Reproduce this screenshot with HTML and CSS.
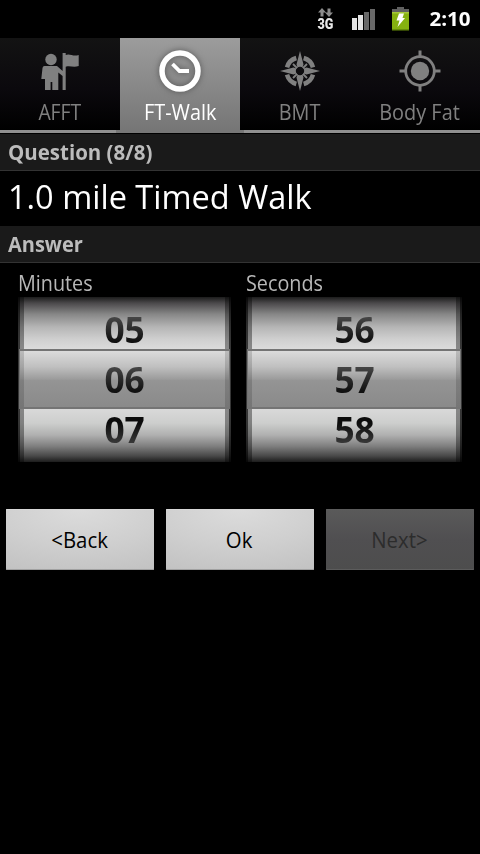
FILE: index.html
```
<!DOCTYPE html>
<html lang="en">
<head>
<meta charset="utf-8">
<title>Fitness Test</title>
<link rel="stylesheet" href="styles.css">
</head>
<body>
<header class="status">
  <div class="network">
    <svg class="arrows" viewBox="0 0 15 9"><path d="M4 0 8 4.500H5.500V8.500H2.500V4.500H0ZM9.500 0.500h3V4.500H15L11 9 7 4.500H9.500Z"/></svg>
    <span class="net-label">3G</span>
  </div>
  <svg class="signal" viewBox="0 0 24 21">
    <path fill="#e4e4e4" d="M0 9h5v12H0zM6 6h5v15H6z"/>
    <path fill="#686868" d="M12 3h5v18h-5zM18 0h5v21h-5z"/>
  </svg>
  <svg class="battery" viewBox="0 0 18 24">
    <path fill="#606060" d="M5 0h7v2H17v4H0V2h5z"/>
    <path fill="#85b110" d="M0 5h17v18H0z"/>
    <path fill="#a5c73a" d="M0 5h17v1.500H0z"/>
    <path fill="#668d08" d="M0 22h17v1.500H0z"/>
    <path fill="#fff" d="M7 6.500h5l-1.500 4.500H13L5.500 20 7.500 13.500H4.500z"/>
  </svg>
  <span class="clock">2:10</span>
</header>

<nav class="tabs">
  <div class="tab">
    <svg class="icon" viewBox="0 -.5 48 48">
      <circle cx="15" cy="11" r="5.700"/>
      <path d="M8.500 17.500H21L26.600 22.500V4.500H29.700V6.500c4-2 7 1.800 13 0v11c-5.500 2-8.500-.8-13 .8V41.500h-3.100V27.500L22.300 24V41.500H16.300V33.500h-1.700V41.500H9V30.500H5.300L6.500 19.500Q6.800 17.500 8.500 17.500Z"/>
    </svg>
    <span class="label afft">AFFT</span>
  </div>
  <div class="tab selected">
    <svg class="icon" viewBox="0 -.5 48 48">
      <circle class="line" cx="24" cy="22.500" r="18" stroke-width="5.500"/>
      <path class="line" d="M16.500 15.500 23.500 22.500H33" stroke-width="3.800"/>
    </svg>
    <span class="label">FT-Walk</span>
  </div>
  <div class="tab">
    <svg class="icon" viewBox="0 -.5 48 48">
      <path class="line" stroke-width="4.500" d="M11 18.800A13.500 13.500 0 0 1 20.300 9.500M27.700 9.500A13.500 13.500 0 0 1 37 18.800M37 26.200A13.500 13.500 0 0 1 27.700 35.500M20.300 35.500A13.500 13.500 0 0 1 11 26.200"/>
      <path class="line" stroke-width="1.800" d="m17 15.500 4 4m10-4-4 4m-10 10 4-4m10 4-4-4"/>
      <path fill-rule="evenodd" d="M24 2.500 27.500 16 26.700 18.200 28.300 19.800 30.500 19 44 22.500 30.500 26 28.300 25.200 26.700 26.800 27.500 29 24 42.500 20.500 29 21.300 26.800 19.700 25.200 17.500 26 4 22.500 17.500 19 19.700 19.800 21.300 18.200 20.500 16ZM24 18.300a4.200 4.200 0 1 0 0 8.400 4.200 4.200 0 0 0 0-8.400Z"/>
    </svg>
    <span class="label">BMT</span>
  </div>
  <div class="tab">
    <svg class="icon" viewBox="0 -.5 48 48">
      <circle cx="24" cy="22.500" r="9.200"/>
      <circle class="line" cx="24" cy="22.500" r="14.300" stroke-width="2.800"/>
      <path class="line" stroke-width="3" d="M24 2v6M24 37v6M3.500 22.500h6M38.500 22.500h6"/>
    </svg>
    <span class="label">Body Fat</span>
  </div>
</nav>
<div class="strip"></div>

<main>
  <h2 class="section"><span class="question">Question (8/8)</span></h2>
  <h1 class="title"><span>1.0 mile Timed Walk</span></h1>
  <h2 class="section"><span class="answer">Answer</span></h2>

  <div class="pickers">
    <div class="field minutes">
      <span class="caption">Minutes</span>
      <div class="wheel">
        <div class="band"></div>
        <span class="num top">05</span>
        <span class="num mid">06</span>
        <span class="num bottom">07</span>
      </div>
    </div>
    <div class="field seconds">
      <span class="caption">Seconds</span>
      <div class="wheel">
        <div class="band"></div>
        <span class="num top">56</span>
        <span class="num mid">57</span>
        <span class="num bottom">58</span>
      </div>
    </div>
  </div>

  <div class="buttons">
    <button class="btn"><span>&lt;Back</span></button>
    <button class="btn"><span>Ok</span></button>
    <button class="btn" disabled><span>Next&gt;</span></button>
  </div>
</main>
</body>
</html>
```
FILE: styles.css
```
* { box-sizing: border-box; }

body {
  margin: 0;
  width: 480px;
  min-height: 854px;
  background: #000;
  color: #fff;
  font-family: "Open Sans", "Noto Sans", sans-serif;
}

h1, h2 { margin: 0; }

/* status bar */
.status {
  height: 38px;
  display: flex;
  align-items: flex-start;
  padding-left: 317px;
}
.network {
  width: 16px;
  padding-top: 8px;
  display: flex;
  flex-direction: column;
  align-items: center;
}
.arrows { width: 15px; height: 9px; fill: #8c8c8c; }
.net-label {
  font: 900 15px/14px "Roboto", sans-serif;
  transform: scaleX(.84);
  color: #e8e8e8;
}
.signal { width: 24px; height: 21px; margin: 9px 0 0 19px; }
.battery { width: 18px; height: 24px; margin: 7px 0 0 16px; }
.clock {
  margin-left: 18px;
  width: 44px;
  text-align: center;
  font-size: 20px;
  font-weight: 700;
  line-height: 38px;
  transform: scaleX(1.03);
}

/* tabs */
.tabs { display: flex; height: 92px; }
.tab {
  width: 120px;
  height: 92px;
  padding-top: 10px;
  display: flex;
  flex-direction: column;
  align-items: center;
  background: linear-gradient(#131313, #0b090d 55%, #000);
  color: #808080;
}
.tab.selected {
  background: linear-gradient(#9c9c9c, #767676);
  color: #fff;
}
.icon { width: 48px; height: 48px; fill: currentColor; overflow: visible; }
.icon .line { fill: none; stroke: currentColor; }
.selected .icon { filter: drop-shadow(0 0 3px #555); }
.label {
  margin-top: 2px;
  font-size: 21.5px;
  line-height: 28px;
  white-space: nowrap;
  transform: scaleX(.925);
}
.label.afft { transform: scaleX(.9); }
.strip {
  height: 4px;
  border-bottom: 1px solid #000;
  background: linear-gradient(90deg, #909090 116px, #777 116px, #777 244px, #909090 244px);
}

/* question and answer */
.section {
  height: 37px;
  padding-left: 8px;
  background: #1a1a1a;
  border-bottom: 1px solid #333;
  color: #bcbcbc;
  font-size: 21px;
  line-height: 36px;
}
.section span, .title span, .caption {
  display: inline-block;
  transform-origin: left;
}
.question { transform: scaleX(.975); }
.answer { transform: scaleX(.952); }
.title {
  height: 55px;
  padding-left: 8px;
  font-size: 33px;
  font-weight: 400;
  line-height: 52px;
}
.title span { transform: scaleX(.985); }

/* number wheels */
.pickers { display: flex; gap: 15px; padding: 7px 18px 0; }
.field { display: flex; flex-direction: column; align-items: flex-start; }
.minutes { width: 213px; }
.seconds { width: 216px; }
.caption {
  height: 27px;
  font-size: 21px;
  line-height: 26px;
  color: #b8b8b8;
  transform: scaleX(.942);
}
.wheel {
  position: relative;
  width: 100%;
  height: 165px;
  padding-top: 8px;
  display: flex;
  flex-direction: column;
  align-items: center;
  background:
    linear-gradient(90deg, rgba(0,0,0,.75) 2px, rgba(0,0,0,.38) 2px, rgba(0,0,0,.38) 6px, transparent 6px, transparent calc(100% - 6px), rgba(0,0,0,.38) calc(100% - 6px), rgba(0,0,0,.38) calc(100% - 2px), rgba(0,0,0,.75) calc(100% - 2px)),
    linear-gradient(#1c1c1c, #4a484a 6px, #868686 17px, #b5b5b5 30px, #cfcfcf 42px, #dcdcdc 53px, #d9d9d9 112px, #cdcecd 126px, #b0b0b0 138px, #808080 149px, #484848 159px, #1c1c1c);
}
.band {
  position: absolute;
  left: 1px;
  right: 1px;
  top: 52px;
  height: 60px;
  border: solid #747474;
  border-width: 2px 1px;
  background:
    linear-gradient(90deg, rgba(0,0,0,.15) 4px, transparent 4px, transparent calc(100% - 4px), rgba(0,0,0,.15) calc(100% - 4px)),
    linear-gradient(#dcdcdc, #c0c0c0 28%, #9c9c9c 50%, #949494 53%, #8a8a8a);
}
.num {
  position: relative;
  left: .5px;
  font-size: 36px;
  font-weight: 700;
  line-height: 50px;
  color: transparent;
  background-clip: text;
  -webkit-background-clip: text;
  transform: scaleX(.98);
}
.minutes .num { left: 0; }
.top, .mid { background-image: linear-gradient(#444 13px, #333 20px, #111 36px); }
.bottom { background-image: linear-gradient(#0c0c0c 18px, #222 28px, #3c3c3c 40px); }

/* buttons */
.buttons { display: flex; gap: 12px; padding: 47px 6px 0; }
.btn {
  width: 148px;
  height: 61px;
  padding: 2px 0 0;
  border: 0;
  border-radius: 1px;
  background: radial-gradient(ellipse 110% 120% at 50% 0, #dcdcdc, #cfcfcf 50%, #c0c0c0);
  box-shadow: inset 0 -1px #a0a0a0, inset 0 1px #d8d8d8;
  color: #000;
  font-family: inherit;
  font-size: 21px;
  line-height: 59px;
}
.btn span { display: inline-block; transform: translateX(-.6px) scaleX(.97); }
.btn:disabled {
  background: linear-gradient(#5a5a5a, #504f51 50%, #4d4d4d);
  box-shadow: inset 0 1px #5c5c5c, inset 0 -1px #5c5c5c;
  color: #2c2c2c;
}
```
